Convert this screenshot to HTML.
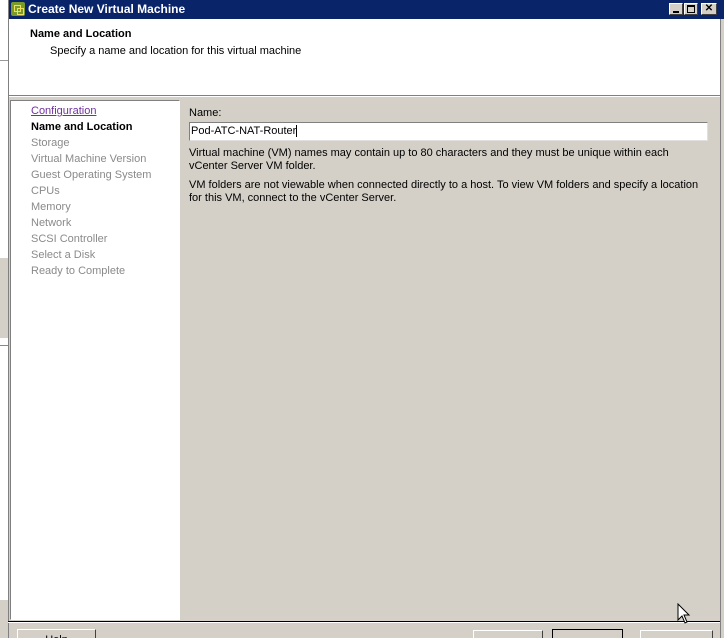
<!DOCTYPE html><html><head><style>
html,body{margin:0;width:724px;height:638px;overflow:hidden}
body{background:#fff;font-family:"Liberation Sans",sans-serif;font-size:11px;position:relative}
.a{position:absolute}
</style></head><body>
<div class="a" style="left:0;top:0;width:8px;height:638px;background:#fff"></div>
<div class="a" style="left:0;top:60px;width:8px;height:1px;background:#999"></div>
<div class="a" style="left:0;top:258px;width:8px;height:80px;background:#d4d0c8"></div>
<div class="a" style="left:0;top:345px;width:8px;height:1px;background:#888"></div>
<div class="a" style="left:0;top:600px;width:8px;height:38px;background:#d4d0c8"></div>
<div class="a" style="left:8px;top:0;width:716px;height:638px;background:#d4d0c8;border-left:1px solid #808080"></div>
<div class="a" style="left:9px;top:0;width:715px;height:19px;background:#0a246a"></div>
<div class="a" style="left:11px;top:2px;width:14px;height:14px;background:#7a9a2a;border-radius:2px"><div style="position:absolute;left:3px;top:3px;width:5px;height:5px;border:1px solid #f0e060"></div><div style="position:absolute;left:6px;top:6px;width:5px;height:5px;border:1px solid #f0e060"></div></div>
<div class="a" style="left:28px;top:2px;color:#fff;font-weight:bold;font-size:12px;line-height:15px">Create New Virtual Machine</div>
<div class="a" style="left:669px;top:3px;width:14px;height:12px;background:#d4d0c8;border:1px solid;border-color:#fff #404040 #404040 #fff;box-sizing:border-box"><div style="position:absolute;left:3px;top:7px;width:6px;height:2px;background:#000"></div></div>
<div class="a" style="left:684px;top:3px;width:14px;height:12px;background:#d4d0c8;border:1px solid;border-color:#fff #404040 #404040 #fff;box-sizing:border-box"><div style="position:absolute;left:2px;top:1px;width:6px;height:5px;border:1px solid #000;border-top-width:2px"></div></div>
<div class="a" style="left:701px;top:3px;width:16px;height:12px;background:#d4d0c8;border:1px solid;border-color:#fff #404040 #404040 #fff;box-sizing:border-box;font-size:10px;line-height:10px;text-align:center;font-weight:bold">✕</div>
<div class="a" style="left:9px;top:19px;width:711px;height:76px;background:#fff"></div>
<div class="a" style="left:30px;top:28px;font-weight:bold">Name and Location</div>
<div class="a" style="left:50px;top:45px">Specify a name and location for this virtual machine</div>
<div class="a" style="left:9px;top:95px;width:711px;height:1px;background:#808080"></div>
<div class="a" style="left:9px;top:96px;width:711px;height:1px;background:#fff"></div>
<div class="a" style="left:720px;top:19px;width:1px;height:619px;background:#808080"></div>
<div class="a" style="left:10px;top:100px;width:168px;height:518px;background:#fff;border:1px solid;border-color:#808080 #fff #fff #808080"></div>
<div class="a" style="left:31px;top:103px;line-height:16px;color:#8a8a8a">
<div style="color:#7030a0;text-decoration:underline">Configuration</div>
<div style="color:#000;font-weight:bold">Name and Location</div>
<div>Storage</div><div>Virtual Machine Version</div><div>Guest Operating System</div><div>CPUs</div><div>Memory</div><div>Network</div><div>SCSI Controller</div><div>Select a Disk</div><div>Ready to Complete</div></div>
<div class="a" style="left:189px;top:107px">Name:</div>
<div class="a" style="left:189px;top:122px;width:519px;height:19px;background:#fff;border:1px solid;border-color:#808080 #e0e0e0 #e0e0e0 #808080;box-sizing:border-box;padding:2px 1px;line-height:13px">Pod-ATC-NAT-Router<span style="border-left:1px solid #000"></span></div>
<div class="a" style="left:189px;top:147px;line-height:13px;width:520px">Virtual machine (VM) names may contain up to 80 characters and they must be unique within each<br>vCenter Server VM folder.</div>
<div class="a" style="left:189px;top:179px;line-height:13px;width:520px">VM folders are not viewable when connected directly to a host. To view VM folders and specify a location<br>for this VM, connect to the vCenter Server.</div>
<div class="a" style="left:8px;top:621px;width:712px;height:1px;background:#000"></div>
<div class="a" style="left:8px;top:622px;width:712px;height:1px;background:#fff"></div>
<div class="a" style="left:17px;top:629px;width:79px;height:20px;border:1px solid;border-color:#fff #404040 #404040 #fff;text-align:center;box-sizing:border-box;line-height:14px;padding-top:3px">Help</div>
<div class="a" style="left:473px;top:630px;width:70px;height:20px;border:1px solid;border-color:#fff #404040 #404040 #fff;box-sizing:border-box"></div>
<div class="a" style="left:552px;top:629px;width:71px;height:20px;border:1px solid #000;box-sizing:border-box"></div>
<div class="a" style="left:640px;top:630px;width:73px;height:20px;border:1px solid;border-color:#fff #404040 #404040 #fff;box-sizing:border-box"></div>
<svg class="a" style="left:677px;top:603px" width="14" height="22"><path d="M1 1 L1 17 L5 13 L8 20 L10 19 L7 12 L12 12 Z" fill="#fff" stroke="#000"/></svg>
</body></html>
